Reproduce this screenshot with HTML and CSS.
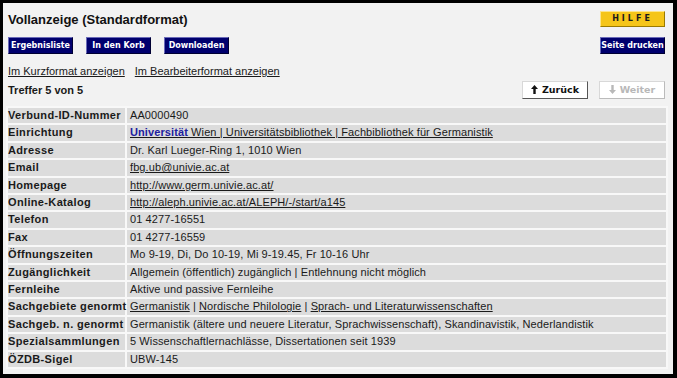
FILE: index.html
```html
<!DOCTYPE html>
<html lang="de">
<head>
  <meta charset="UTF-8">
  <meta name="viewport" content="width=device-width, initial-scale=1.0">
  <title>Vollanzeige (Standardformat)</title>
  <link rel="stylesheet" href="styles.css">
</head>
<body>
  <div class="rahmen">

    <div class="zeile kopf">
      <h1 class="titel">Vollanzeige (Standardformat)</h1>
      <a class="knopf hilfe" href="#">HILFE</a>
    </div>

    <div class="zeile menue">
      <div class="gruppe">
        <a class="knopf blau" href="#">Ergebnisliste</a>
        <a class="knopf blau" href="#">In den Korb</a>
        <a class="knopf blau" href="#">Downloaden</a>
      </div>
      <a class="knopf blau" href="#">Seite drucken</a>
    </div>

    <div class="formate">
      <a href="#">Im Kurzformat anzeigen</a>
      <a href="#">Im Bearbeiterformat anzeigen</a>
    </div>

    <div class="zeile treffer">
      <span class="anzahl">Treffer 5 von 5</span>
      <div class="blaettern">
        <a class="knopf weiss" href="#">
          <svg class="pfeil" width="7" height="9" viewBox="0 0 7 9"><path d="M3.5 0 L7 4 L4.7 4 L4.7 9 L2.3 9 L2.3 4 L0 4 Z" fill="currentColor"/></svg>
          Zurück
        </a>
        <span class="knopf weiss aus">
          <svg class="pfeil" width="7" height="9" viewBox="0 0 7 9"><path d="M3.5 9 L7 5 L4.7 5 L4.7 0 L2.3 0 L2.3 5 L0 5 Z" fill="currentColor"/></svg>
          Weiter
        </span>
      </div>
    </div>

    <table class="daten">
      <colgroup><col class="spalte-name"><col></colgroup>
      <tr><th>Verbund-ID-Nummer</th><td>AA0000490</td></tr>
      <tr><th>Einrichtung</th><td><a href="#"><b class="uni">Universität</b> Wien | Universitätsbibliothek | Fachbibliothek für Germanistik</a></td></tr>
      <tr><th>Adresse</th><td>Dr. Karl Lueger-Ring 1, 1010 Wien</td></tr>
      <tr><th>Email</th><td><a href="#">fbg.ub@univie.ac.at</a></td></tr>
      <tr><th>Homepage</th><td><a href="#">http://www.germ.univie.ac.at/</a></td></tr>
      <tr><th>Online-Katalog</th><td><a href="#">http://aleph.univie.ac.at/ALEPH/-/start/a145</a></td></tr>
      <tr><th>Telefon</th><td>01 4277-16551</td></tr>
      <tr><th>Fax</th><td>01 4277-16559</td></tr>
      <tr><th>Öffnungszeiten</th><td>Mo 9-19, Di, Do 10-19, Mi 9-19.45, Fr 10-16 Uhr</td></tr>
      <tr><th>Zugänglichkeit</th><td>Allgemein (öffentlich) zugänglich | Entlehnung nicht möglich</td></tr>
      <tr><th>Fernleihe</th><td>Aktive und passive Fernleihe</td></tr>
      <tr><th>Sachgebiete genormt</th><td><a href="#">Germanistik</a> | <a href="#">Nordische Philologie</a> | <a href="#">Sprach- und Literaturwissenschaften</a></td></tr>
      <tr><th>Sachgeb. n. genormt</th><td>Germanistik (ältere und neuere Literatur, Sprachwissenschaft), Skandinavistik, Nederlandistik</td></tr>
      <tr><th>Spezialsammlungen</th><td>5 Wissenschaftlernachlässe, Dissertationen seit 1939</td></tr>
      <tr><th>ÖZDB-Sigel</th><td>UBW-145</td></tr>
    </table>

  </div>
</body>
</html>
```

FILE: styles.css
```css
html, body {
  margin: 0;
  height: 100%;
}
body {
  background-color: #000000;
  font-family: "Liberation Sans", Arial, sans-serif;
  font-size: 11px;
  color: #1a1a1a;
  padding: 3px 4px 4px 3px;
  box-sizing: border-box;
}
.rahmen {
  background-color: #f2f2f2;
  height: 100%;
  padding: 0 5px 0 5px;
  box-sizing: border-box;
}
.zeile {
  display: flex;
  justify-content: space-between;
  align-items: center;
  padding-right: 3px;
}
.kopf {
  height: 31px;
  padding-top: 1px;
  box-sizing: border-box;
}
.titel {
  margin: 0;
  font-size: 13px;
  font-weight: bold;
  color: #111111;
}
.gruppe {
  display: flex;
  gap: 13px;
}
.menue {
  height: 19px;
  margin-top: 2px;
}
.knopf {
  display: inline-block;
  box-sizing: border-box;
  width: 65px;
  height: 17px;
  line-height: 15px;
  text-align: center;
  text-decoration: none;
  font-family: "DejaVu Sans", Verdana, sans-serif;
  font-size: 8px;
  font-weight: bold;
}
.blau {
  background-color: #00006e;
  color: #ffffff;
  border: 1px solid #6a6ab8;
  border-right-color: #000033;
  border-bottom-color: #000033;
}
.hilfe {
  background-color: #f5c518;
  color: #1a1a1a;
  border: 1px solid #fde58a;
  border-right-color: #9a7a00;
  border-bottom-color: #9a7a00;
  letter-spacing: 3px;
  height: 16px;
  line-height: 14px;
}
.formate {
  display: flex;
  gap: 10px;
  height: 14px;
  margin-top: 9px;
  line-height: 14px;
}
.formate a {
  color: #1a1a1a;
}
.treffer {
  height: 19px;
  margin-top: 2px;
}
.anzahl {
  font-weight: bold;
}
.blaettern {
  display: flex;
  gap: 11px;
}
.weiss {
  display: inline-flex;
  align-items: center;
  justify-content: center;
  gap: 4px;
  height: 18px;
  width: 66px;
  background-color: #ffffff;
  color: #111111;
  border: 1px solid #d8d8d8;
  border-right-color: #555555;
  border-bottom-color: #555555;
  font-size: 9.5px;
}
.aus {
  color: #b8b8b8;
  border-right-color: #bbbbbb;
  border-bottom-color: #bbbbbb;
}
.daten {
  table-layout: fixed;
  border-collapse: separate;
  border-spacing: 2px;
  margin: 7px 0 0 -2px;
  width: calc(100% + 2px);
  background-color: #f8f8f8;
}
.spalte-name {
  width: 117px;
}
.daten th, .daten td {
  background-color: #dcdcdc;
  height: 15.4px;
  padding: 0 3px;
  text-align: left;
  white-space: nowrap;
  overflow: visible;
  line-height: 15.4px;
}
.daten td {
  letter-spacing: 0.1px;
}
.daten th {
  font-weight: bold;
  padding: 0;
  font-size: 11px;
  letter-spacing: 0.35px;
}
.daten td a {
  color: #1a1a1a;
}
.uni {
  color: #2020a0;
}
```
